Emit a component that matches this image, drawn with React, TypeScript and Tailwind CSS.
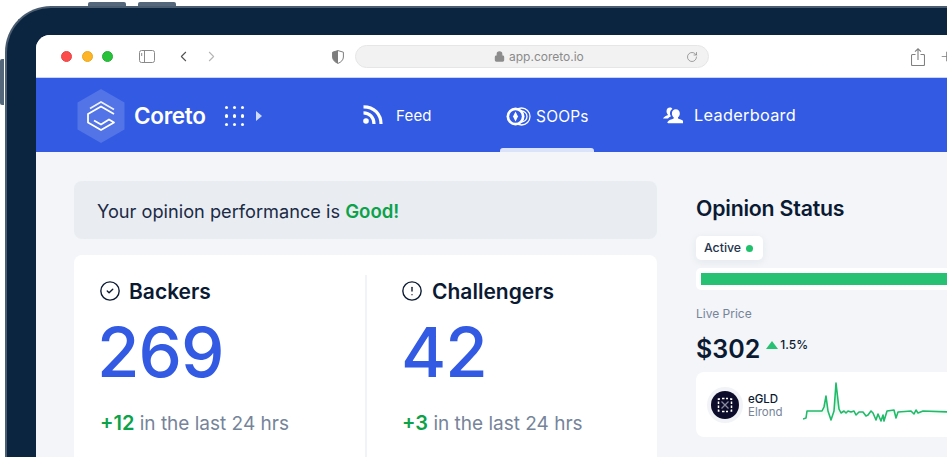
import React from 'react';
import { ChevronLeft, ChevronRight, RotateCw, Plus, Lock, CircleCheck, CircleAlert } from 'lucide-react';

const sparkPoints =
  '0,48 3,47 4,40 16,40 19,40 21,36 23,25 25,40 28,49 31,40 33,12 36,38 38,42 41,40 43,42 45,40 48,41 51,40 53,44 56,41 60,41 63,45 65,44 68,40 70,42 73,49 75,43 78,50 80,44 81,50 84,40 91,39 93,47 95,41 108,40 111,43 113,39 115,42 120,40 146,41';

function TrafficLight({ color, border }: { color: string; border: string }) {
  return <span className={`block shrink-0 w-[11px] h-[11px] rounded-full border ${color} ${border}`} />;
}

function Toolbar() {
  return (
    <div className="h-[42px] pt-[1px] bg-white flex items-center text-[#6f6f6f] shrink-0">
      <div className="flex items-center ml-[25px] gap-[9px] w-[79px]">
        <TrafficLight color="bg-[#fb4b4b]" border="border-[#e94343]" />
        <span className="block ml-[1px]"><TrafficLight color="bg-[#fdb425]" border="border-[#eda71c]" /></span>
        <TrafficLight color="bg-[#27c13a]" border="border-[#22b034]" />
      </div>
      <svg width="16" height="13" viewBox="0 0 16 13" fill="none" className="ml-[-1px]">
        <rect x="0.5" y="0.5" width="15" height="12" rx="2" stroke="#8a8a8a" />
        <line x1="5.5" y1="0.5" x2="5.5" y2="12.5" stroke="#8a8a8a" />
        <line x1="2.7" y1="3" x2="2.7" y2="6" stroke="#8a8a8a" />
      </svg>
      <ChevronLeft size={17} strokeWidth={1.5} className="ml-[20px] text-[#555]" />
      <ChevronRight size={17} strokeWidth={1.5} className="ml-[11px] text-[#b5b5b5]" />
      <svg width="12" height="14" viewBox="0 0 12 14" className="ml-[112px]">
        <path d="M6 .6 11.4 2.2V7c0 3-2.4 5.2-5.4 6.4C3 12.2.6 10 .6 7V2.2Z" fill="none" stroke="#7d7d7d" />
        <path d="M6 .6V13.4C3 12.2.6 10 .6 7V2.2Z" fill="#7d7d7d" />
      </svg>
      <div className="ml-[11px] w-[354px] h-[23px] rounded-full bg-[#f2f2f2] border border-[#e6e6e6] flex items-center relative">
        <Lock size={11} strokeWidth={2.5} className="ml-[138px] text-[#8c8c8c]" fill="#8c8c8c" />
        <span className="ml-[4px] text-[12px] text-[#8a8a8a]">app.coreto.io</span>
        <RotateCw size={12} strokeWidth={1.4} className="absolute right-[10px] top-[5px] text-[#7d7d7d]" />
      </div>
      <svg width="14" height="18" viewBox="0 0 14 18" fill="none" stroke="#808080" strokeWidth="1.1" className="ml-[202px]">
        <path d="M4.5 6.5H1.5a1 1 0 0 0-1 1v9a1 1 0 0 0 1 1h11a1 1 0 0 0 1-1v-9a1 1 0 0 0-1-1h-3" />
        <path d="M7 12V1M4 3.6 7 .8l3 2.8" />
      </svg>
      <Plus size={15} strokeWidth={1.3} className="ml-[14px] text-[#808080] shrink-0" />
    </div>
  );
}

function Logo() {
  return (
    <svg width="48" height="54" viewBox="0 0 48 54" fill="none">
      <path d="M24 0 47.500 13.500V40.500L24 54 .5 40.500V13.500Z" fill="#ffffff" fillOpacity="0.16" />
      <path d="M13 19.500 24 13 37 20.500" stroke="#fff" strokeOpacity="0.9" strokeWidth="1.6" />
      <path d="M37 25 24 17.500 11 25V33.500L24 41 37 33.500 32 30.500 24 35.500 17 31.500" stroke="#fff" strokeWidth="1.8" strokeLinejoin="round" />
    </svg>
  );
}

function DotGrid() {
  return (
    <div className="grid grid-cols-3 gap-x-[4.5px] gap-y-[5px] w-[20px]">
      {Array.from({ length: 9 }).map((_, i) => (
        <span key={i} className="w-[3.5px] h-[3.5px] rounded-full bg-white" />
      ))}
    </div>
  );
}

function FeedIcon() {
  return (
    <svg width="20" height="19" viewBox="0 0 20 19" fill="none" className="ml-[1px]">
      <circle cx="3" cy="16" r="2.800" fill="#fff" />
      <path d="M.5 7.800C6.500 7.800 11 12.500 11 19" stroke="#fff" strokeWidth="3.200" />
      <path d="M.5 1.800C11 1.800 18 9 18 19" stroke="#fff" strokeWidth="3.200" />
    </svg>
  );
}

function CoinsIcon() {
  return (
    <svg width="25" height="19" viewBox="0 0 25 19" fill="none">
      <circle cx="15.500" cy="9.500" r="8.500" stroke="#fff" strokeWidth="1.3" />
      <circle cx="15.500" cy="9.500" r="5.500" stroke="#fff" strokeWidth="1.3" />
      <circle cx="9.500" cy="9.500" r="9" fill="#fff" />
      <circle cx="9.500" cy="9.500" r="6.300" fill="#325ae3" />
      <path d="M9.500 4.500 12 9.500 9.500 14.500 7 9.500Z" fill="#fff" />
    </svg>
  );
}

function UsersIcon() {
  return (
    <svg width="20" height="17" viewBox="0 0 20 17" fill="#fff">
      <path d="M7 0.500C4.800.5 3.500 2.200 3.500 4.300c0 1.500.7 2.900 1.700 3.700C3.500 8.800 1 9.500 0 11.500h5c.6-1 1.600-1.800 3-2.300-1-1.200-1.300-2.900-.8-4.500.3-1 1-2.100 2.200-2.800C8.800 1 8 .5 7 .5Z" />
      <path d="M12.800 2.300c-2.400 0-3.900 1.800-3.900 4.100 0 1.700.8 3.100 1.800 3.900v1.200c-2.300.8-5 1.700-6.200 3.500-.3.600 0 1.300.8 1.300h15c.8 0 1.100-.7.800-1.300-1.200-1.800-3.800-2.700-6.100-3.500v-1.200c1-.8 1.800-2.200 1.800-3.900 0-2.300-1.500-4.100-4-4.100Z" />
    </svg>
  );
}

function Header() {
  return (
    <div className="h-[75px] border-t border-[#c9d5f8] bg-[#325ae3] flex text-white shrink-0">
      <div className="flex items-center ml-[41px] w-[285px] pt-[2px]">
        <Logo />
        <span className="ml-[9px] text-[22.500px] font-semibold tracking-[-0.3px]">Coreto</span>
        <span className="ml-[19px]"><DotGrid /></span>
        <span className="ml-[11px] w-0 h-0 border-y-[5px] border-y-transparent border-l-[6px] border-l-[#cfdafa]" />
      </div>
      <div className="flex items-center w-[138px] pb-[1px]">
        <FeedIcon />
        <span className="ml-[13px] mt-[3px] text-[15px] tracking-[0.2px]">Feed</span>
      </div>
      <div className="w-[94px] flex flex-col relative">
        <div className="flex-1 flex items-center pl-[6px] pt-[7px]">
          <CoinsIcon />
          <span className="ml-[5px] text-[15.500px] tracking-[0.2px]">SOOPs</span>
        </div>
        <div className="h-[4px] bg-[#dbe3fb] rounded-t-[3px]" />
      </div>
      <div className="flex items-center ml-[69px] pt-[1px]">
        <UsersIcon />
        <span className="ml-[11px] text-[16.300px] tracking-[0.3px]">Leaderboard</span>
      </div>
    </div>
  );
}

function StatColumn({
  icon,
  title,
  value,
  delta,
  className,
  valueClass,
}: {
  icon: React.ReactNode;
  title: string;
  value: string;
  delta: string;
  className: string;
  valueClass: string;
}) {
  return (
    <div className={className}>
      <div className="flex items-center gap-[8px] h-[24px] mt-[4px]">
        {icon}
        <span className="text-[21px] leading-none font-semibold text-[#0b1a33]">{title}</span>
      </div>
      <div className={`mt-[7px] text-[69px] leading-[85px] font-medium tracking-[-1px] text-[#325ae3] ${valueClass}`}>{value}</div>
      <div className="mt-[14px] ml-[1px] text-[19px] leading-[28px] text-[#76849a] whitespace-nowrap">
        <span className="text-[20px] font-semibold text-[#0ba24a]">{delta}</span> in the last 24 hrs
      </div>
    </div>
  );
}

function LeftColumn() {
  return (
    <div className="w-[583px] shrink-0">
      <div className="h-[58px] rounded-[8px] bg-[#e9edf2] flex items-center pl-[23px] pt-[3px] text-[18.200px] text-[#1b2a45]">
        <span>Your opinion performance is&nbsp;</span>
        <span className="text-[18.600px] font-semibold text-[#0ba24a]">Good!</span>
      </div>
      <div className="mt-[16px] h-[260px] rounded-[8px] bg-white pt-[20px] flex">
        <StatColumn
          className="w-[293px] pl-[25px] border-r-2 border-[#f0f3f7]"
          icon={<CircleCheck size={22} strokeWidth={1.5} className="text-[#0b1a33]" />}
          title="Backers"
          value="269"
          valueClass="ml-[-2px]"
          delta="+12"
        />
        <StatColumn
          className="pl-[34px]"
          icon={<CircleAlert size={22} strokeWidth={1.5} className="text-[#0b1a33] mr-[1px]" />}
          title="Challengers"
          value="42"
          valueClass=""
          delta="+3"
        />
      </div>
    </div>
  );
}

function RightColumn() {
  return (
    <div className="w-[300px] shrink-0">
      <h2 className="mt-[14px] text-[21.300px] leading-[27px] font-semibold tracking-[-0.2px] text-[#0b1a33]">Opinion Status</h2>
      <div className="mt-[14px] w-[67px] h-[24px] rounded-[5px] bg-white shadow-[0_2px_8px_rgba(30,50,90,0.07)] flex items-center pl-[8px] text-[12.300px] font-medium text-[#24334d]">
        Active
        <span className="ml-[5px] w-[7px] h-[7px] rounded-full bg-[#1fc16b]" />
      </div>
      <div className="mt-[8px] h-[22px] rounded-[5px] bg-white pl-[5px] py-[5px]">
        <div className="h-full bg-[#26c172]" />
      </div>
      <div className="mt-[16px] text-[12px] leading-[16px] text-[#76849a]">Live Price</div>
      <div className="mt-[10px] h-[32px] flex items-center">
        <span className="mt-[3px] text-[25px] font-semibold text-[#0b1a33]">$302</span>
        <span className="ml-[6px] mb-[6px] w-0 h-0 border-x-[6.500px] border-x-transparent border-b-[8px] border-b-[#26c172]" />
        <span className="ml-[2px] mb-[6px] text-[12px] font-medium text-[#0b1a33]">1.5%</span>
      </div>
      <div className="mt-[8px] h-[65px] rounded-[8px] bg-white flex items-center pl-[11px]">
        <div className="w-[36px] h-[36px] rounded-full bg-[#f1f3f6] flex items-center justify-center shrink-0">
          <svg width="28" height="28" viewBox="0 0 28 28" fill="none">
            <circle cx="14" cy="14" r="14" fill="#0d0c2b" />
            <path d="M9 8H7.500V20H9M19 8h1.500V20H19M11 7.500h6M11 20.500h6" stroke="#fff" strokeWidth="1.500" strokeDasharray="2.500 1.500" />
            <path d="M10.500 10.500 17.500 17.500M17.500 10.500 10.500 17.500" stroke="#8b8b9e" strokeWidth="1.300" />
          </svg>
        </div>
        <div className="ml-[5px] w-[50px] pt-[2px] text-[11.500px] leading-[13px]">
          <div className="font-medium text-[#0b1a33]">eGLD</div>
          <div className="text-[#76849a]">Elrond</div>
        </div>
        <svg width="146" height="65" viewBox="0 1 146 65" fill="none" className="ml-[5px] shrink-0">
          <defs>
            <linearGradient id="sparkFill" x1="0" y1="0" x2="0" y2="1">
              <stop offset="0.45" stopColor="#26c172" stopOpacity="0.22" />
              <stop offset="0.85" stopColor="#26c172" stopOpacity="0" />
            </linearGradient>
          </defs>
          <polygon points={`${sparkPoints} 146,52 0,52`} fill="url(#sparkFill)" />
          <polyline points={sparkPoints} stroke="#1fbb68" strokeWidth="1.600" strokeLinejoin="round" />
        </svg>
      </div>
    </div>
  );
}

export default function App() {
  return (
    <div className="relative w-[947px] h-[457px] overflow-hidden bg-white pl-[5px] pt-[6px] font-['Inter',sans-serif]">
      {/* hardware buttons */}
      <span className="absolute left-[88px] top-[2px] w-[38px] h-[4px] rounded-t-[2px] bg-[#55677a]" />
      <span className="absolute left-[138px] top-[2px] w-[38px] h-[4px] rounded-t-[2px] bg-[#55677a]" />
      <span className="absolute left-0 top-[59px] w-[4px] h-[46px] rounded-l-[2px] bg-[#55677a]" />

      <div className="w-[1100px] h-[600px] rounded-tl-[46px] border-t-2 border-l-2 border-[#4a5d70] bg-[#0b2540] pl-[29px] pt-[27px]">
        <div className="h-[560px] rounded-tl-[14px] overflow-hidden bg-[#f3f5f8] flex flex-col">
          <Toolbar />
          <Header />
          <div className="flex pl-[38px] pt-[29px] gap-[39px]">
            <LeftColumn />
            <RightColumn />
          </div>
        </div>
      </div>
    </div>
  );
}
